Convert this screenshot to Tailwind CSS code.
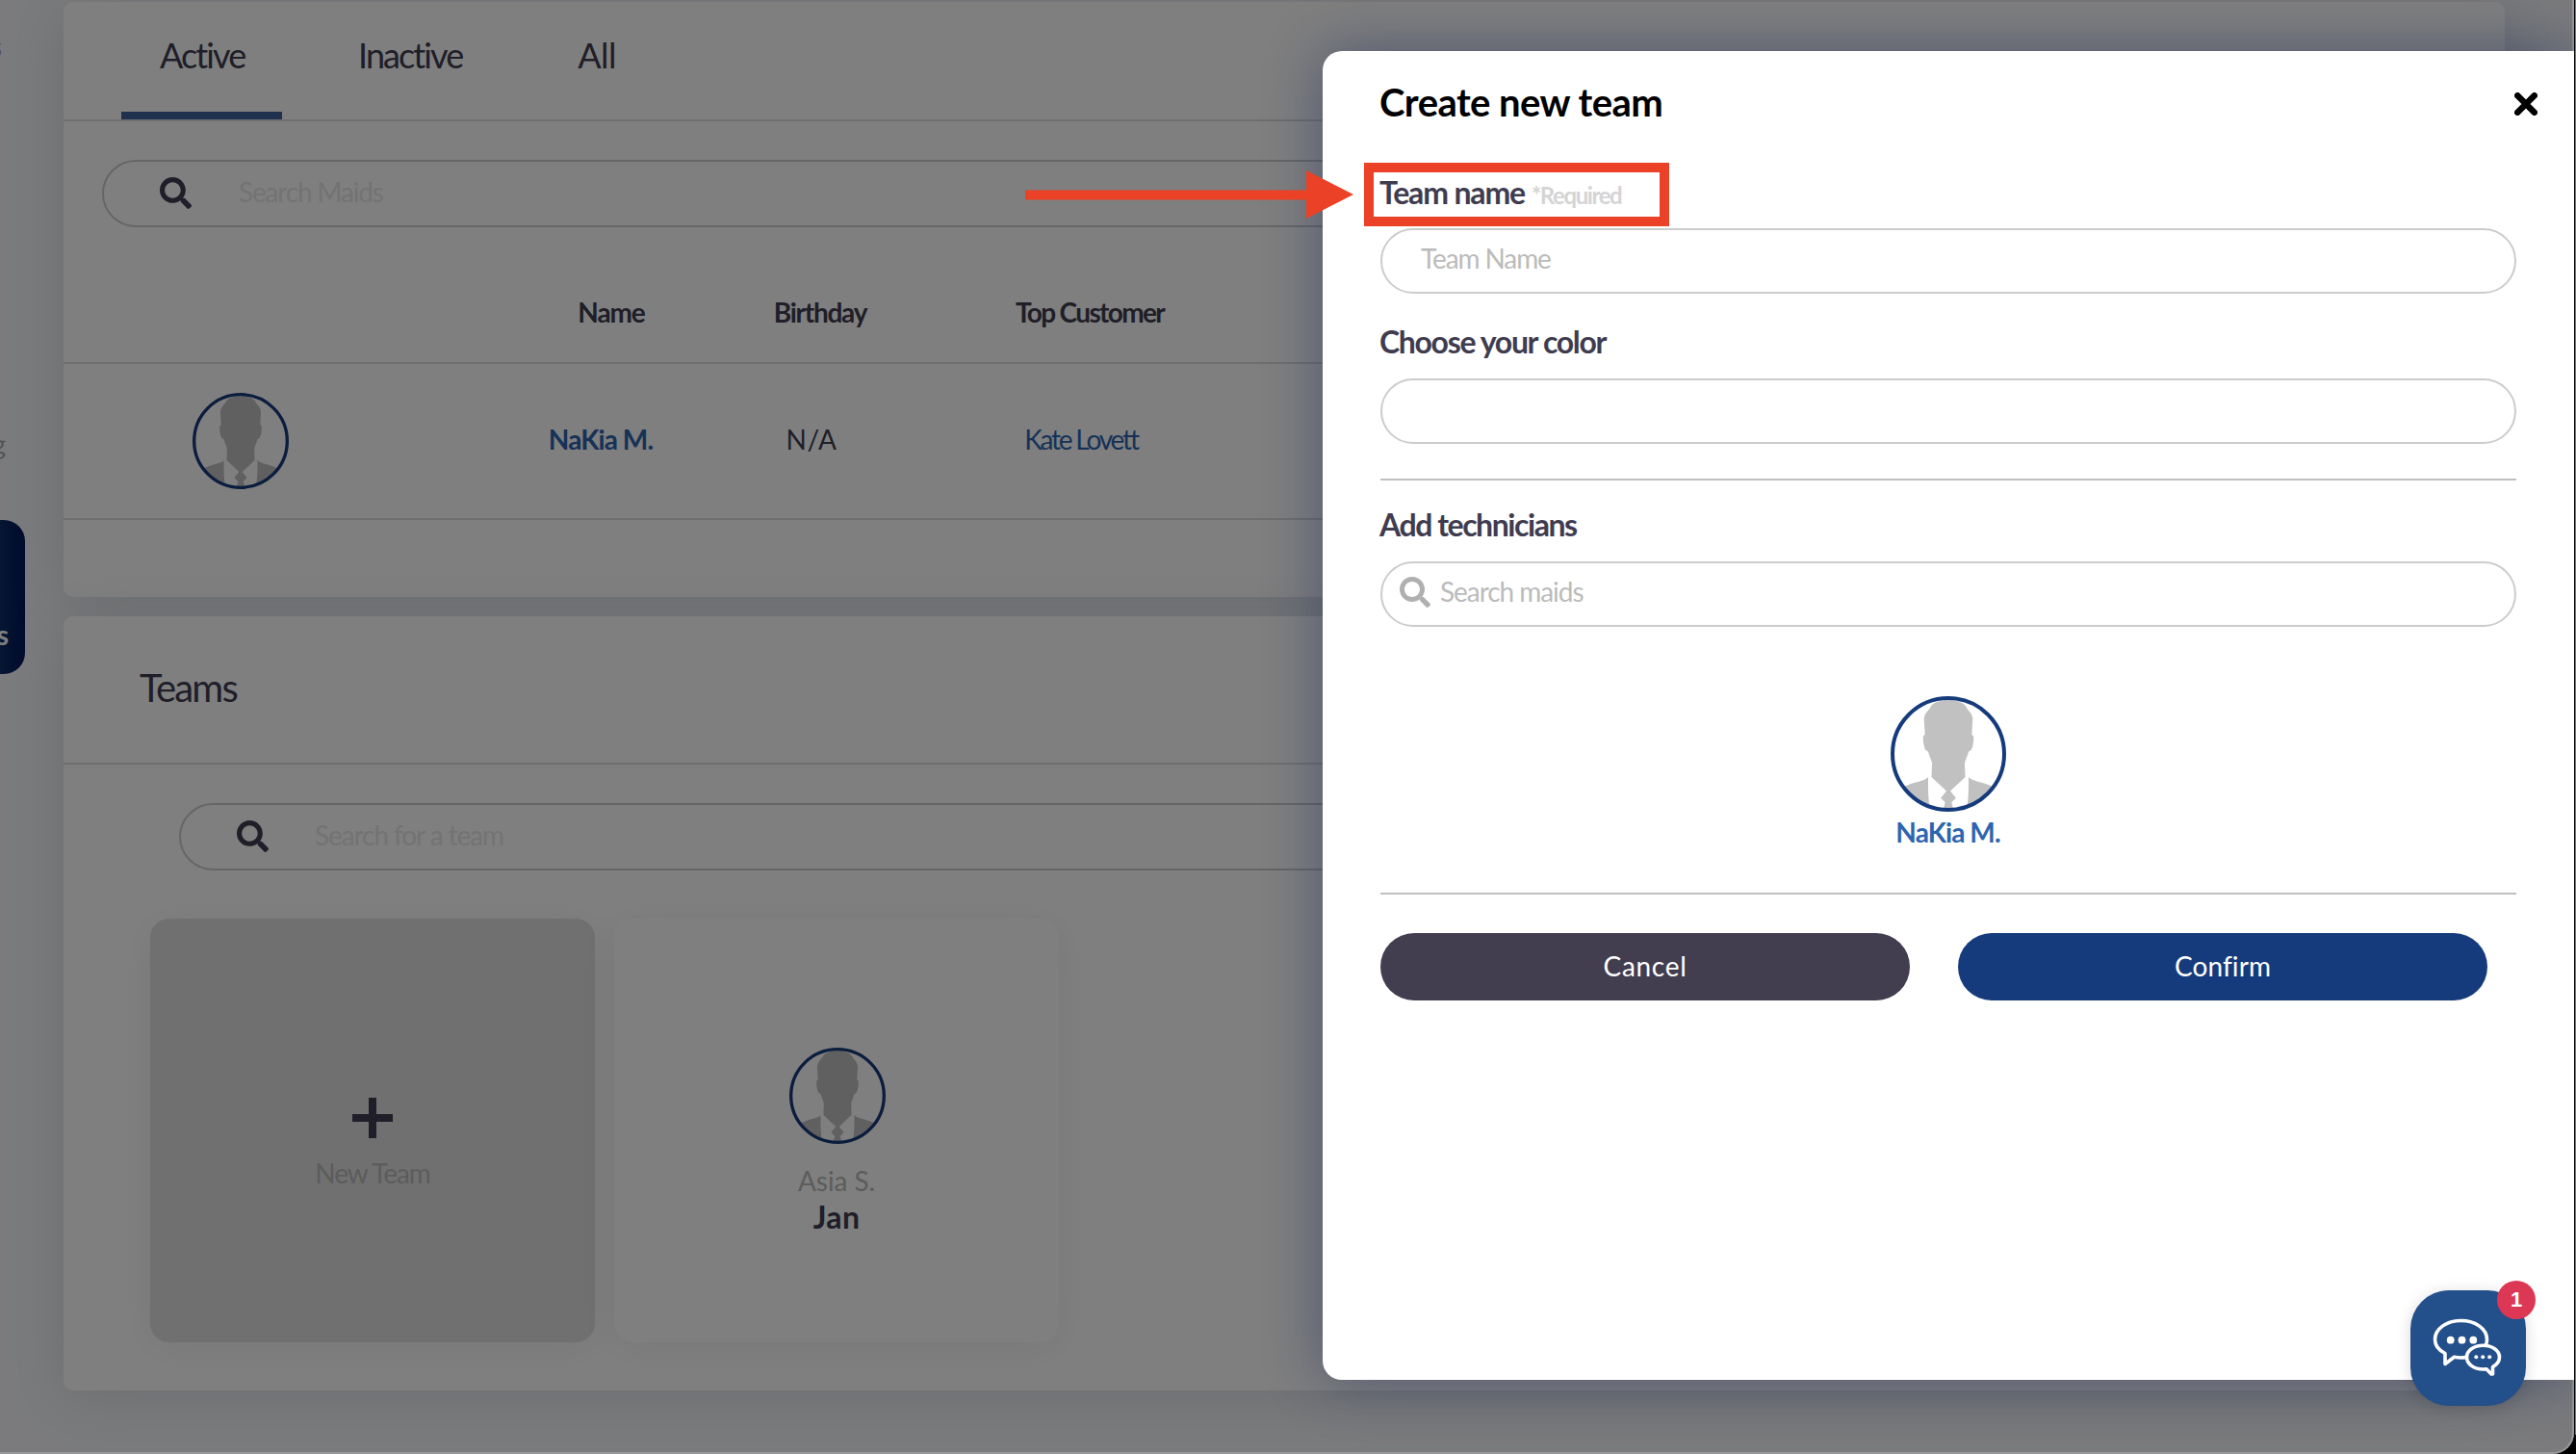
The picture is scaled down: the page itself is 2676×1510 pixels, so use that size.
<!DOCTYPE html>
<html lang="en">
<head>
  <meta charset="UTF-8" />
  <meta name="viewport" content="width=device-width, initial-scale=1.0" />
  <title>Maids - Create new team</title>
  <script src="https://cdn.jsdelivr.net/npm/@tailwindcss/browser@4"></script>
  <style>
    body {
      font-family: Lato, 'Liberation Sans', sans-serif;
    }
  </style>
</head>
<body class="bg-black text-[#403c50]">
  <!-- shared icons -->
  <svg class="absolute w-0 h-0">
    <clipPath id="face"><circle cx="60" cy="60" r="57" /></clipPath>
    <symbol id="search" viewBox="0 0 512 512">
      <path fill="currentColor" d="M505 442.700 405.300 343c-4.500-4.500-10.600-7-17-7H372c27.600-35.300 44-79.700 44-128C416 93.100 322.900 0 208 0S0 93.100 0 208s93.100 208 208 208c48.300 0 92.700-16.400 128-44v16.300c0 6.400 2.500 12.500 7 17l99.700 99.700c9.400 9.400 24.600 9.400 33.900 0l28.300-28.300c9.400-9.400 9.400-24.600.1-34zM208 336c-70.700 0-128-57.200-128-128 0-70.700 57.200-128 128-128 70.700 0 128 57.200 128 128 0 70.700-57.200 128-128 128z" />
    </symbol>
    <symbol id="avatar" viewBox="0 0 120 120">
      <circle cx="60" cy="60" r="58" fill="#fff" />
      <g clip-path="url(#face)" fill="#c1c1c1">
        <path d="M60 4C52 4 44.500 6 41.500 11C40 15 35 17 34.700 24L35.700 40.300C33.500 40 33.500 43 34 47C34.500 52 35.500 57 39 57.500C40 62 42 65 43 69.500L42.500 84L58 98.500L52 105.700L56.700 110.300L54 120H66L63.300 110.300L68 105.700L62 98.500L77.500 84L77 69.500C78 65 80 62 81 57.500C84.500 57 85.500 52 86 47C86.500 43 86.500 40 84.300 40.300L85.300 24C85 17 80 15 78.500 11C75.500 6 68 4 60 4Z" />
        <path d="M39 84C34 89 24 89 15 93.500V120H42C39 110 39 100 39 84Z" />
        <path d="M81 84C86 89 96 89 105 93.500V120H78C81 110 81 100 81 84Z" />
      </g>
      <circle cx="60" cy="60" r="58" fill="none" stroke="#163b7c" stroke-width="4" />
    </symbol>
  </svg>

  <div class="relative w-[2674px] h-[1510px] overflow-hidden rounded-br-[22px] bg-[#f6f7fa]">
    <div class="flex h-full">
      <!-- sidebar -->
      <aside class="w-[26px] shrink-0 overflow-hidden text-[28px] leading-8 text-[#a4a8b0]">
        <div class="flex justify-end pr-[24px] pt-[32px]">s</div>
        <div class="flex justify-end pr-5 mt-[381px]">g</div>
        <div class="flex flex-col justify-end items-end w-[26px] h-[160px] mt-[63px] pr-[17px] pb-[25px] rounded-r-[22px] bg-linear-to-r from-[#0c2d68] to-[#04165a] text-white font-bold">s</div>
      </aside>

      <main class="ml-10 mt-0.5 w-[2536px] shrink-0">
        <section class="h-[618px] bg-white rounded-[10px] shadow-[0_6px_60px_rgba(70,95,110,0.18)]">
          <div class="flex h-[124px] border-b-2 border-[#dcdcdc] pl-[60px] text-[36px] leading-10">
            <div class="w-[167px] border-b-8 border-[#41609e] pt-[35px] pl-[40px] tracking-[-1.9px]">Active</div>
            <div class="pt-[35px] pl-[79px] tracking-[-1.91px]">Inactive</div>
            <div class="pt-[35px] pl-[120px] tracking-[-0.6px]">All</div>
          </div>
          <div class="ml-10 mr-10 mt-10 h-[70px] rounded-full border-2 border-[#ccc] flex items-center">
            <svg class="ml-[58px] mb-0.5 w-[33px] h-[33px]"><use href="#search" /></svg>
            <span class="ml-[49px] mb-1 text-[28px] text-[#e6e6e6] tracking-[-1.15px]">Search Maids</span>
          </div>
          <div class="grid grid-cols-[449px_218px_220px_340px] items-center h-[142px] pt-[35px] border-b-2 border-[#dcdcdc] text-[28px] font-bold text-center">
            <div></div>
            <div class="pl-[22px] tracking-[-1.1px]">Name</div>
            <div class="pl-[18px] tracking-[-1.25px]">Birthday</div>
            <div class="pl-[18px] tracking-[-1.65px]">Top Customer</div>
          </div>
          <div class="grid grid-cols-[449px_218px_220px_340px] items-center h-[162px] border-b-2 border-[#dcdcdc] text-[28px] text-center">
            <svg class="ml-[134px] w-[100px] h-[100px]"><use href="#avatar" /></svg>
            <div class="mb-1 font-bold text-[#2d65ae] tracking-[-0.9px]">NaKia M.</div>
            <div class="mb-1 tracking-[0.5px]">N/A</div>
            <div class="mb-1 text-[#2d65ae] tracking-[-2.2px]">Kate Lovett</div>
          </div>
        </section>

        <section class="mt-5 h-[804px] bg-white rounded-[10px] shadow-[0_6px_60px_rgba(70,95,110,0.18)]">
          <div class="h-[154px] border-b-2 border-[#dcdcdc] pl-[79px] pt-[49px] text-[40px] leading-[50px] tracking-[-1.8px]">Teams</div>
          <div class="ml-[120px] mr-10 mt-10 h-[70px] rounded-full border-2 border-[#ccc] flex items-center">
            <svg class="ml-[58px] mb-0.5 w-[33px] h-[33px]"><use href="#search" /></svg>
            <span class="ml-[48px] mb-1 text-[28px] text-[#e6e6e6] tracking-[-1.08px]">Search for a team</span>
          </div>
          <div class="flex gap-5 ml-[90px] mt-[50px]">
            <div class="flex flex-col items-center w-[462px] h-[440px] rounded-[20px] bg-[#e0e0e0] shadow-[0_6px_40px_rgba(0,0,0,0.06)]">
              <svg class="mt-[186px] w-[42px] h-[42px]" viewBox="0 0 42 42"><path d="M21 0V42M0 21H42" stroke="#403c50" stroke-width="8" /></svg>
              <div class="mt-4 text-[28px] leading-10 text-[#b8b8b8] tracking-[-1.1px]">New Team</div>
            </div>
            <div class="flex flex-col items-center w-[462px] h-[440px] rounded-[20px] bg-white shadow-[0_6px_40px_rgba(0,0,0,0.06)]">
              <svg class="mt-[134px] ml-0.5 w-[100px] h-[100px]"><use href="#avatar" /></svg>
              <div class="mt-[18px] text-[28px] leading-10 text-[#b8b8b8] tracking-[-0.1px]">Asia S.</div>
              <div class="text-[32px] leading-9 font-bold tracking-[0.4px]">Jan</div>
            </div>
          </div>
        </section>
      </main>
    </div>

    <!-- page dimmer -->
    <div class="absolute inset-0 bg-black/50"></div>
    <div class="absolute inset-0 rounded-br-[22px] border-r-2 border-b-2 border-[#979899]"></div>

    <!-- create team dialog -->
    <div class="absolute left-[1374px] top-[53px] w-[1300px] h-[1380px] bg-white rounded-l-[20px] pl-[60px] pr-[60px] pt-[29px] shadow-[0_0_60px_rgba(20,37,92,0.44)]">
      <div class="flex justify-between items-center -mr-6 text-black">
        <h2 class="-ml-px text-[40px] leading-[48px] font-bold tracking-[-0.55px]">Create new team</h2>
        <svg class="w-6 h-6 mr-0.5 mt-1" viewBox="0 0 22 22"><path d="M3 3L19 19M19 3L3 19" stroke="currentColor" stroke-width="6" stroke-linecap="round" /></svg>
      </div>

      <div class="mt-[50px] flex items-baseline h-10 -ml-px text-[32px] leading-10 font-bold tracking-[-1.16px]">Team name<span class="ml-[7px] text-[24px] text-[#d4d4d4] tracking-[-1.4px]">*Required</span></div>
      <div class="mt-[17px] h-[68px] rounded-full border-2 border-[#ccc] pl-[40px] flex items-center"><span class="mb-1.5 text-[28px] text-[#bbb] tracking-[-1.1px]">Team Name</span></div>

      <div class="mt-[30px] -ml-px text-[32px] leading-10 font-bold tracking-[-1.33px]">Choose your color</div>
      <div class="mt-[18px] h-[68px] rounded-full border-2 border-[#ccc]"></div>
      <div class="mt-[36px] h-0.5 bg-[#c0c0c0]"></div>

      <div class="mt-[26px] -ml-px text-[32px] leading-10 font-bold tracking-[-1.45px]">Add technicians</div>
      <div class="mt-[18px] h-[68px] rounded-full border-2 border-[#ccc] pl-[18px] flex items-center">
        <svg class="w-8 h-8 mb-1 text-[#b0b0b0]"><use href="#search" /></svg>
        <span class="ml-[10px] mb-1.5 text-[28px] text-[#bbb] tracking-[-1.05px]">Search maids</span>
      </div>

      <div class="flex flex-col items-center mt-[72px]">
        <svg class="w-[120px] h-[120px]"><use href="#avatar" /></svg>
        <div class="mt-px -ml-px text-[28px] leading-10 font-bold text-[#2d65ae] tracking-[-0.9px]">NaKia M.</div>
      </div>
      <div class="mt-[43px] h-0.5 bg-[#c0c0c0]"></div>

      <div class="mt-10 flex gap-[50px] text-[28px] text-white">
        <button class="w-[550px] h-[70px] pb-0.5 rounded-full bg-[#433d50] tracking-[0.71px]">Cancel</button>
        <button class="w-[550px] h-[70px] pb-0.5 rounded-full bg-[#163b7c] tracking-[0.1px]">Confirm</button>
      </div>
    </div>

    <!-- highlight on the team name label -->
    <div class="absolute left-[1417px] top-[169px] w-[317px] h-[66px] border-10 border-[#eb4126]"></div>
    <svg class="absolute left-[1065px] top-[177px] w-[342px] h-[50px]" viewBox="0 0 342 50"><path fill="#eb4126" d="M0 20.500H292V0L341 25L292 50V30.500H0Z" /></svg>

    <!-- chat launcher -->
    <div class="absolute left-[2504px] top-[1340px] w-[120px] h-[120px] rounded-[40px] bg-[#23508a] shadow-[0_2px_16px_rgba(0,0,0,0.15)]">
      <svg class="absolute left-4 top-5 w-[90px] h-[80px]" viewBox="0 0 90 80" fill="none" stroke="#fff" stroke-width="3.600" stroke-linejoin="round">
        <path d="M42 49.500C38 50.200 33 50 29.500 49.200L20 56.500V45.500C13 42 9.500 37 9.500 31C9.500 20 21.500 11.500 36.500 11.500C51.500 11.500 63.500 20 63.500 31Q63.500 34 62.500 36.500" />
        <path d="M69.500 67V59.500C74 57 76.500 53.500 76.500 49.500C76.500 42.500 69 37.200 59.500 37.200C50 37.200 42.500 42.500 42.500 49.500C42.500 56.500 50 62 59.500 62L63 61.700L68 67Z" />
        <g fill="#fff" stroke="none">
          <circle cx="25.700" cy="31.700" r="3.900" /><circle cx="37.500" cy="31.700" r="3.900" /><circle cx="49.300" cy="31.700" r="3.900" />
          <circle cx="52.300" cy="49.300" r="2" /><circle cx="59.200" cy="49.300" r="2" /><circle cx="66.200" cy="49.300" r="2" />
        </g>
      </svg>
      <div class="absolute -right-2.5 -top-2.5 w-10 h-10 rounded-full bg-[#dc3754] text-white text-[22px] leading-10 font-bold text-center font-[family-name:Liberation_Sans]">1</div>
    </div>
  </div>
  <div class="absolute left-[2675px] top-0 w-px h-[1490px] bg-[#777]"></div>
</body>
</html>
